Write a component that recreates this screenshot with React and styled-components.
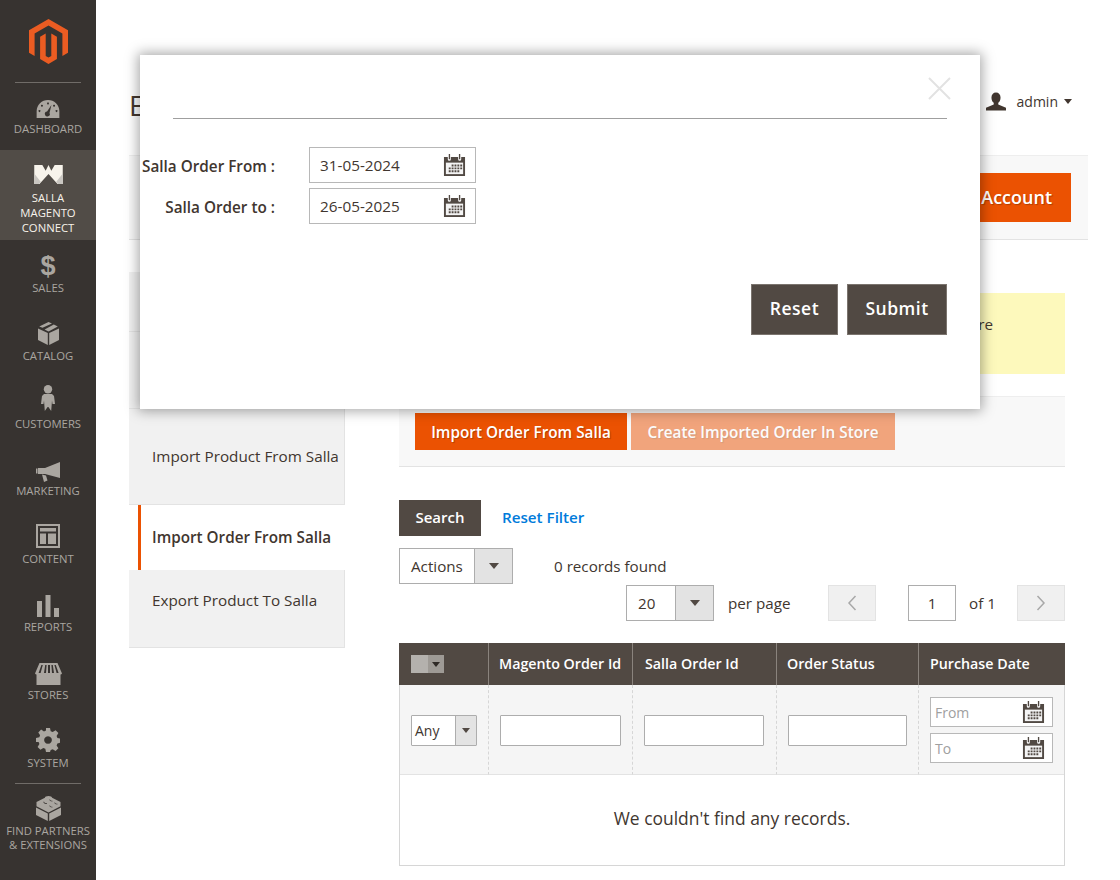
import styled, { createGlobalStyle } from "styled-components";

const GlobalStyle = createGlobalStyle`
  html, body {
    margin: 0;
    padding: 0;
    height: 880px;
    overflow: hidden;
    background: #fff;
    font-family: "Open Sans", "Liberation Sans", sans-serif;
    color: #41362f;
  }
  * {
    box-sizing: border-box;
  }
`;

const Page = styled.div`
  position: relative;
  display: flex;
  width: 1120px;
  height: 880px;
  overflow: hidden;
`;

const Sidebar = styled.nav`
  flex: 0 0 96px;
  background: #373330;
  display: flex;
  flex-direction: column;
  align-items: stretch;
`;

const LogoBox = styled.div`
  height: 83px;
  margin: 0 15px;
  border-bottom: 1px solid #706c68;
  display: flex;
  justify-content: center;
  padding-top: 19px;
`;

const MenuItem = styled.div`
  height: ${(p) => p.$h || 68}px;
  padding-top: ${(p) => p.$top || 0}px;
  background: ${(p) => (p.$active ? "#514c47" : "transparent")};
  color: ${(p) => (p.$active ? "#f7f3eb" : "#aaa6a0")};
  display: flex;
  flex-direction: column;
  align-items: center;
  font-size: 11.3px;
  line-height: ${(p) => (p.$active ? 15 : 14)}px;
  text-align: center;
  text-transform: uppercase;
  white-space: pre-line;
`;

const MenuIcon = styled.div`
  height: ${(p) => p.$h || 29}px;
  display: flex;
  align-items: flex-end;
  justify-content: center;
  margin-bottom: ${(p) => p.$mb ?? 4}px;
`;

const MenuDivider = styled.div`
  flex: 0 0 1px;
  margin: 0 15px;
  background: #706c68;
`;

const Main = styled.main`
  flex: 1;
  min-width: 0;
  padding: 0 32px 0 33px;
  display: flex;
  flex-direction: column;
`;

const Header = styled.header`
  height: 155px;
  display: flex;
  align-items: center;
  justify-content: space-between;
  padding: 54px 16px 0 0;
`;

const Title = styled.h1`
  margin: 0;
  font-size: 28px;
  font-weight: 400;
  color: #41362f;
`;

const AdminBox = styled.div`
  display: flex;
  align-items: center;
  font-size: 14px;
  color: #41362f;
  gap: 9px;
  padding-bottom: 7px;
`;

const AdminIcon = styled.svg`
  margin-right: 2px;
`;

const AdminCaret = styled.span`
  width: 0;
  height: 0;
  margin-left: -3px;
  border-left: 4.5px solid transparent;
  border-right: 4.5px solid transparent;
  border-top: 5px solid #41362f;
`;

const Caret = styled.span`
  width: 0;
  height: 0;
  border-left: ${(p) => p.$s || 5}px solid transparent;
  border-right: ${(p) => p.$s || 5}px solid transparent;
  border-top: ${(p) => (p.$s || 5) + 1}px solid ${(p) => p.$c || "#41362f"};
`;

const ActionBar = styled.div`
  height: 85px;
  background: #f8f8f8;
  border-top: 1px solid #eeeeee;
  border-bottom: 1px solid #e3e3e3;
  display: flex;
  align-items: center;
  justify-content: flex-end;
  padding: 0 17px 0 0;
`;

const PrimaryButton = styled.button`
  height: 49px;
  padding: 0 19px 2px;
  border: 0;
  background: #eb5202;
  color: #fff;
  font-family: inherit;
  font-size: 18px;
  font-weight: 600;
  text-shadow: 1px 1px 1px rgba(0, 0, 0, 0.25);
`;

const Columns = styled.div`
  display: flex;
  align-items: flex-start;
  margin-top: 32px;
`;

const Tabs = styled.aside`
  flex: 0 0 216px;
  margin-right: 54px;
  display: flex;
  flex-direction: column;
`;

const Tab = styled.div`
  height: ${(p) => p.$h}px;
  padding: ${(p) => p.$top}px 0 0 ${(p) => (p.$active ? 11 : 23)}px;
  margin-left: ${(p) => (p.$active ? 9 : 0)}px;
  background: ${(p) => (p.$active ? "#fff" : "#f1f1f1")};
  border-left: ${(p) => (p.$active ? "3px solid #eb5202" : "0")};
  border-right: ${(p) => (p.$active ? "0" : "1px solid #e3e3e3")};
  border-bottom: ${(p) => (p.$active ? "0" : "1px solid #e3e3e3")};
  font-size: 15.25px;
  line-height: 20px;
  font-weight: ${(p) => (p.$active ? 600 : 400)};
  color: #41362f;
  white-space: nowrap;
`;

const Content = styled.section`
  flex: 0 0 666px;
  display: flex;
  flex-direction: column;
  padding-top: 21px;
`;

const Notice = styled.div`
  height: 81px;
  background: #fdf9bc;
  padding: 20px 72px 0 0;
  font-size: 15.2px;
  line-height: 22px;
  text-align: right;
  color: #41362f;
`;

const ImportBar = styled.div`
  height: 71px;
  margin-top: 22px;
  background: #f8f8f8;
  border-top: 1px solid #eeeeee;
  border-bottom: 1px solid #e3e3e3;
  display: flex;
  align-items: center;
  gap: 4px;
  padding-left: 16px;
`;

const ImportButton = styled.button`
  height: 37px;
  width: ${(p) => p.$w}px;
  padding: 0;
  border: 0;
  background: #eb5202;
  color: #fff;
  opacity: ${(p) => (p.$faded ? 0.5 : 1)};
  font-family: inherit;
  font-size: 15.3px;
  font-weight: 600;
  text-shadow: 1px 1px 1px rgba(0, 0, 0, 0.25);
  white-space: nowrap;
`;

const SearchRow = styled.div`
  display: flex;
  align-items: center;
  gap: 21px;
  margin-top: 33px;
`;

const DarkButton = styled.button`
  height: 36px;
  width: 82px;
  padding: 0 0 2px;
  border: 0;
  background: #514943;
  color: #fff;
  font-family: inherit;
  font-size: 15px;
  font-weight: 600;
`;

const ResetLink = styled.a`
  color: #007bdb;
  font-size: 15.2px;
  font-weight: 600;
  margin-top: -2px;
`;

const ActionsRow = styled.div`
  display: flex;
  align-items: center;
  gap: 41px;
  margin-top: 12px;
  font-size: 15.2px;
`;

const SelectBox = styled.div`
  display: flex;
  width: ${(p) => p.$w}px;
  height: 36px;
  border: 1px solid #adadad;
  background: #fff;
  font-size: 15.2px;
`;

const SelectText = styled.div`
  flex: 1;
  display: flex;
  align-items: center;
  padding-left: 11px;
  color: #41362f;
`;

const SelectArrow = styled.div`
  width: ${(p) => p.$w || 38}px;
  background: #e3e3e3;
  border-left: 1px solid #adadad;
  display: flex;
  align-items: center;
  justify-content: center;
`;

const PagerRow = styled.div`
  display: flex;
  align-items: center;
  justify-content: flex-end;
  height: 36px;
  margin-top: 1px;
  font-size: 15.2px;
`;

const PerPage = styled.span`
  width: 62px;
  margin: 0 38px 0 14px;
  white-space: nowrap;
`;

const PagerButton = styled.div`
  width: 48px;
  height: 36px;
  background: #f0f0f0;
  border: 1px solid #e3e3e3;
  display: flex;
  align-items: center;
  justify-content: center;
`;

const PageInput = styled.div`
  width: 48px;
  height: 36px;
  margin: 0 13px 0 32px;
  border: 1px solid #adadad;
  display: flex;
  align-items: center;
  justify-content: center;
`;

const OfText = styled.span`
  width: 26px;
  margin-right: 22px;
  white-space: nowrap;
`;

const Grid = styled.div`
  margin-top: 22px;
  display: grid;
  grid-template-columns: 88px 144px 144px 142px 146px;
  border-bottom: 1px solid #d6d6d6;
  border-left: 1px solid #d6d6d6;
  border-right: 1px solid #d6d6d6;
`;

const HeadCell = styled.div`
  height: 42px;
  margin-left: ${(p) => (p.$first ? -1 : 0)}px;
  margin-right: ${(p) => (p.$last ? -1 : 0)}px;
  background: #514943;
  border-left: ${(p) => (p.$first ? "0" : "1px solid #8a837d")};
  color: #fff;
  font-size: 14.25px;
  font-weight: 600;
  display: flex;
  align-items: center;
  padding: 0 0 2px ${(p) => p.$pad}px;
  white-space: nowrap;
`;

const MassSelect = styled.div`
  display: flex;
  width: 33px;
  height: 18px;
  margin-top: 2px;
`;

const MassBox = styled.div`
  flex: 1;
  background: #b4b1ad;
`;

const MassArrow = styled.div`
  width: 16px;
  background: #9e9a95;
  display: flex;
  align-items: center;
  justify-content: center;
`;

const FilterCell = styled.div`
  height: 90px;
  background: #f5f5f5;
  border-left: ${(p) => (p.$first ? "0" : "1px dashed #d6d6d6")};
  border-bottom: 1px solid #e3e3e3;
  display: flex;
  flex-direction: column;
  justify-content: center;
  align-items: flex-start;
  gap: 6px;
  padding: 1px 0 0 11px;
`;

const TextField = styled.div`
  width: ${(p) => p.$w}px;
  height: 31px;
  background: #fff;
  border: 1px solid #adadad;
  border-radius: 1px;
`;

const AnySelect = styled.div`
  display: flex;
  width: 66px;
  height: 31px;
  background: #fff;
  border: 1px solid #adadad;
  border-radius: 1px;
  font-size: 14px;
`;

const AnyText = styled.div`
  flex: 1;
  display: flex;
  align-items: center;
  padding-left: 3px;
`;

const DateField = styled.div`
  width: 123px;
  height: 30px;
  background: #fff;
  border: 1px solid #b8b8b8;
  display: flex;
  align-items: center;
  justify-content: space-between;
  padding: 0 7px 0 4px;
  font-size: 14px;
  color: #a0a0a0;
`;

const EmptyRow = styled.div`
  grid-column: 1 / -1;
  height: 90px;
  padding-bottom: 4px;
  display: flex;
  align-items: center;
  justify-content: center;
  font-size: 17.45px;
  color: #41362f;
`;

const Modal = styled.div`
  position: absolute;
  left: 140px;
  top: 55px;
  width: 840px;
  height: 354px;
  background: #fff;
  box-shadow: 0 0 12px 2px rgba(0, 0, 0, 0.35);
  padding: 0 33px 0 2px;
  display: flex;
  flex-direction: column;
`;

const ModalHead = styled.div`
  position: relative;
  height: 64px;
  margin-left: 31px;
  border-bottom: 1px solid #9f9f9f;
`;

const CloseIcon = styled.svg`
  position: absolute;
  right: -4px;
  top: 22px;
`;

const FormRows = styled.div`
  display: flex;
  flex-direction: column;
  gap: 5px;
  margin-top: 28px;
`;

const FormRow = styled.div`
  display: flex;
  align-items: center;
  font-size: 15.3px;
  font-weight: 600;
  color: #41362f;
`;

const FormLabel = styled.label`
  width: 133px;
  text-align: right;
  margin: 2px 34px 0 0;
  white-space: nowrap;
`;

const DateInput = styled.div`
  width: 167px;
  height: 36px;
  border: 1px solid #b8b8b8;
  display: flex;
  align-items: center;
  justify-content: space-between;
  padding: 0 9px 0 10px;
  font-size: 15.3px;
  font-weight: 400;
  color: #41362f;
`;

const ModalButtons = styled.div`
  display: flex;
  justify-content: flex-end;
  gap: 9px;
  margin-top: 60px;
`;

const ModalButton = styled.button`
  width: ${(p) => p.$w}px;
  height: 51px;
  padding: 0 0 3px;
  border: 1px solid #7b746e;
  background: #514943;
  color: #fff;
  font-family: inherit;
  font-size: 17.5px;
  font-weight: 600;
  letter-spacing: 0.5px;
`;

const CalendarIcon = ({ size = 23 }) => (
  <svg width={size} height={size} viewBox="0 0 24 24">
    <path
      fill="#514943"
      d="M1 3h4v2.5a1.6 1.6 0 0 0 3.2 0V3h7.6v2.5a1.6 1.6 0 0 0 3.2 0V3h4v20H1z"
    />
    <path fill="#514943" d="M6 0h1.4v5.5H6zM16.6 0H18v5.5h-1.4z" />
    <rect x="3" y="9" width="18" height="12" fill="#f4f4f4" />
    <path
      fill="#514943"
      d="M9 11h2v2H9zm3 0h2v2h-2zm3 0h2v2h-2zm3 0h2v2h-2zM6 14h2v2H6zm3 0h2v2H9zm3 0h2v2h-2zm3 0h2v2h-2zm3 0h2v2h-2zM6 17h2v2H6zm3 0h2v2H9zm3 0h2v2h-2zm3 0h2v2h-2z"
    />
  </svg>
);

const MagentoLogo = () => (
  <svg width="39" height="45" viewBox="0 0 39 45">
    <path
      fill="#eb5c22"
      d="M19.5 0 39 11.3v22.4l-5.6 3.2V14.6L19.5 6.500 5.600 14.600v22.300L0 33.700V11.300z"
    />
    <path
      fill="#eb5c22"
      d="M19.500 45l-8.400-4.900V17.800l5.600-3.200v22.300l2.800 1.700 2.800-1.700V14.600l5.600 3.200v22.300z"
    />
  </svg>
);

const icons = {
  dashboard: (
    <svg width="24" height="18" viewBox="0 0 24 19">
      <path
        fill="#aaa6a0"
        fillRule="evenodd"
        d="M0 19v-7a12 12 0 0 1 24 0v7zM15.600 5.400 11 12.200a2.600 2.600 0 1 0 2.600 1.400zM12 2.600a1 1 0 1 0 .01 0zM5.600 5a1 1 0 1 0 .01 0zM18.400 5a1 1 0 1 0 .01 0zM3 10.600a1 1 0 1 0 .01 0zM21 10.600a1 1 0 1 0 .01 0z"
      />
    </svg>
  ),
  salla: (
    <svg width="29" height="19" viewBox="0 0 30 20">
      <path
        fill="#f7f3eb"
        d="M0 0h8.500l3.500 6 3-6 3 6 3.500-6H30v20h-5.500L15 9.500 5.500 20H0z"
      />
      <path fill="#c9c6c1" d="M0 9l7 9-2 2H0zM30 9l-7 9 2 2h5z" />
    </svg>
  ),
  sales: (
    <span style={{ fontSize: 27, fontWeight: 700, lineHeight: "21px", fontFamily: "Liberation Sans" }}>$</span>
  ),
  catalog: (
    <svg width="21" height="23" viewBox="0 0 21 23">
      <path fill="#aaa6a0" d="M0 6.600 9.800 11v12L0 18zM21 6.600 11.200 11v12L21 18z" />
      <path fill="#aaa6a0" d="M10.500 0 14 1.600 4.500 5.800 1.200 4.400zM15.800 2.400l4 2-9.300 5-3.900-1.900z" />
    </svg>
  ),
  customers: (
    <svg width="14" height="26" viewBox="0 0 14 26">
      <circle cx="7" cy="4.200" r="4.200" fill="#aaa6a0" />
      <path
        fill="#aaa6a0"
        d="M3 9h8l2 2 1 8h-2.500L11 15.500 10.200 26 7.400 22 6.600 22 3.800 26 3 15.500 2.500 19H0l1-8z"
      />
    </svg>
  ),
  marketing: (
    <svg width="24" height="20" viewBox="0 0 24 20">
      <path fill="#aaa6a0" d="M24 0v16L9 12H2V6h7z" />
      <path fill="#aaa6a0" d="M0 6.500h1.500v5H0zM6 12.500l4 1 1.500 5-3.500 1.500z" />
    </svg>
  ),
  content: (
    <svg width="24" height="24" viewBox="0 0 24 24">
      <path
        fill="#aaa6a0"
        fillRule="evenodd"
        d="M0 0h24v24H0zM2 2v20h20V2zM4 4h16v3.500H4zM4 9.500h6V20H4zM12 9.500h8V20h-8z"
      />
    </svg>
  ),
  reports: (
    <svg width="22" height="22" viewBox="0 0 22 22">
      <path fill="#aaa6a0" d="M0 6h5v16H0zM8.500 0h5v22h-5zM17 13h5v9h-5z" />
    </svg>
  ),
  stores: (
    <svg width="27" height="22" viewBox="0 0 27 22">
      <path
        fill="#aaa6a0"
        d="M4.500 0h18L27 10.500a2.300 2.300 0 0 1-1.500 1V22h-24V11.500A2.300 2.300 0 0 1 0 10.500zM6.400 2 3.600 10h2L7.800 2zM10.200 2 9 10h2l.6-8zM13 2v8h2V2zM16.400 2l.6 8h2l-1.200-8zM19.400 2l2.200 8h2l-2.800-8z"
      />
    </svg>
  ),
  system: (
    <svg width="24" height="24" viewBox="0 0 24 24">
      <path
        fill="#aaa6a0"
        fillRule="evenodd"
        d="M10 0h4l.7 3.300 2 .8L19.600 2.300l2.800 2.800-1.800 2.900.8 2 3.300.7v4l-3.300.7-.8 2 1.800 2.900-2.800 2.800-2.900-1.800-2 .8L14 24h-4l-.7-3.300-2-.8-2.900 1.800-2.800-2.800 1.800-2.900-.8-2L0 14v-4l3.300-.7.8-2L2.300 4.400l2.800-2.800 2.900 1.800 2-.8zM12 8.200a3.800 3.800 0 1 0 .01 0z"
      />
    </svg>
  ),
  partners: (
    <svg width="25" height="25" viewBox="0 0 25 25">
      <path fill="#aaa6a0" d="M0 11.500 11.800 17.500V25L0 19zM25 11.500 13.200 17.500V25L25 19z" />
      <path
        fill="#aaa6a0"
        d="M12.500 0c2 0 3.400.8 3.600 1.800l8.400 4.100v4.300l-12 6.200-12-6.200V5.900l8.400-4.100C8.900.8 10.500 0 12.500 0z"
      />
      <path
        fill="#373330"
        d="M8 5.400c0 1 1.300 1.800 3 1.800v.8c-2 0-3.600-.9-3.600-2.100zM14 3.400c0 .8 1 1.300 2.400 1.300v.7c-1.800 0-3-.8-3-2zM14 9.400c0 .8 1 1.300 2.400 1.300v.7c-1.800 0-3-.8-3-2zM19 6.400c0 .8 1 1.300 2.400 1.300v.7c-1.800 0-3-.8-3-2z"
      />
    </svg>
  ),
};

const menu = [
  { key: "dashboard", label: "Dashboard", h: 67, top: 6 },
  { key: "salla", label: "Salla\nMagento\nConnect", h: 90, top: 6, icon: 28, mb: 6, active: true },
  { key: "sales", label: "Sales", h: 68, top: 8 },
  { key: "catalog", label: "Catalog", h: 68, top: 8 },
  { key: "customers", label: "Customers", h: 67, top: 8, icon: 27, mb: 6 },
  { key: "marketing", label: "Marketing", h: 68, top: 8, icon: 31, mb: 2 },
  { key: "content", label: "Content", h: 68, top: 8 },
  { key: "reports", label: "Reports", h: 68, top: 8, icon: 30, mb: 3 },
  { key: "stores", label: "Stores", h: 68, top: 8, icon: 30, mb: 3 },
  { key: "system", label: "System", h: 68, top: 8 },
];

const App = () => {
  return (
    <Page>
      <GlobalStyle />
      <Sidebar>
        <LogoBox>
          <MagentoLogo />
        </LogoBox>
        {menu.map((m) => (
          <MenuItem key={m.key} $h={m.h} $top={m.top} $active={m.active}>
            <MenuIcon $h={m.icon} $mb={m.mb}>{icons[m.key]}</MenuIcon>
            {m.label}
          </MenuItem>
        ))}
        <MenuDivider />
        <MenuItem $h={80}>
          <MenuIcon $h={37} $mb={3}>{icons.partners}</MenuIcon>
          {"Find Partners\n& Extensions"}
        </MenuItem>
      </Sidebar>

      <Main>
        <Header>
          <Title>Export Order</Title>
          <AdminBox>
            <AdminIcon width="20" height="19" viewBox="0 0 22 20">
              <path
                fill="#41362f"
                d="M11 0c3 0 5 2.300 5 5.500 0 2.500-1 4.800-2.500 6v1.800L22 17v3H0v-3l8.500-3.700v-1.800C7 10.300 6 8 6 5.500 6 2.300 8 0 11 0z"
              />
            </AdminIcon>
            admin
            <AdminCaret />
          </AdminBox>
        </Header>
        <ActionBar>
          <PrimaryButton>Add Salla Account</PrimaryButton>
        </ActionBar>

        <Columns>
          <Tabs>
            <Tab $h={60} $top={20}>Salla Account</Tab>
            <Tab $h={77} $top={20}>Export Category</Tab>
            <Tab $h={96} $top={37}>Import Product From Salla</Tab>
            <Tab $h={65} $top={22} $active>Import Order From Salla</Tab>
            <Tab $h={78} $top={20}>Export Product To Salla</Tab>
          </Tabs>
          <Content>
            <Notice>are</Notice>
            <ImportBar>
              <ImportButton $w={212}>Import Order From Salla</ImportButton>
              <ImportButton $w={264} $faded>Create Imported Order In Store</ImportButton>
            </ImportBar>
            <SearchRow>
              <DarkButton>Search</DarkButton>
              <ResetLink>Reset Filter</ResetLink>
            </SearchRow>
            <ActionsRow>
              <SelectBox $w={114}>
                <SelectText>Actions</SelectText>
                <SelectArrow><Caret $c="#514943" /></SelectArrow>
              </SelectBox>
              <span>0 records found</span>
            </ActionsRow>
            <PagerRow>
              <SelectBox $w={88}>
                <SelectText>20</SelectText>
                <SelectArrow><Caret $c="#514943" /></SelectArrow>
              </SelectBox>
              <PerPage>per page</PerPage>
              <PagerButton>
                <svg width="10" height="16" viewBox="0 0 10 16">
                  <path d="M8.500 1 2 8l6.500 7" fill="none" stroke="#a8a8a8" strokeWidth="1.500" />
                </svg>
              </PagerButton>
              <PageInput>1</PageInput>
              <OfText>of 1</OfText>
              <PagerButton>
                <svg width="10" height="16" viewBox="0 0 10 16">
                  <path d="M1.500 1 8 8l-6.500 7" fill="none" stroke="#a8a8a8" strokeWidth="1.500" />
                </svg>
              </PagerButton>
            </PagerRow>
            <Grid>
              <HeadCell $first $pad={12}>
                <MassSelect>
                  <MassBox />
                  <MassArrow><Caret $s={4} $c="#2f2a26" /></MassArrow>
                </MassSelect>
              </HeadCell>
              <HeadCell $pad={10}>Magento Order Id</HeadCell>
              <HeadCell $pad={12}>Salla Order Id</HeadCell>
              <HeadCell $pad={10}>Order Status</HeadCell>
              <HeadCell $last $pad={11}>Purchase Date</HeadCell>

              <FilterCell $first>
                <AnySelect>
                  <AnyText>Any</AnyText>
                  <SelectArrow $w={21}><Caret $s={4} $c="#514943" /></SelectArrow>
                </AnySelect>
              </FilterCell>
              <FilterCell><TextField $w={121} /></FilterCell>
              <FilterCell><TextField $w={120} /></FilterCell>
              <FilterCell><TextField $w={119} /></FilterCell>
              <FilterCell>
                <DateField>From<CalendarIcon /></DateField>
                <DateField>To<CalendarIcon /></DateField>
              </FilterCell>

              <EmptyRow>We couldn't find any records.</EmptyRow>
            </Grid>
          </Content>
        </Columns>
      </Main>

      <Modal>
        <ModalHead>
          <CloseIcon width="23" height="23" viewBox="0 0 23 23">
            <path d="M1 1l21 21M22 1 1 22" stroke="#e2e2e2" strokeWidth="2" fill="none" />
          </CloseIcon>
        </ModalHead>
        <FormRows>
          <FormRow>
            <FormLabel>Salla Order From :</FormLabel>
            <DateInput>31-05-2024<CalendarIcon /></DateInput>
          </FormRow>
          <FormRow>
            <FormLabel>Salla Order to :</FormLabel>
            <DateInput>26-05-2025<CalendarIcon /></DateInput>
          </FormRow>
        </FormRows>
        <ModalButtons>
          <ModalButton $w={87}>Reset</ModalButton>
          <ModalButton $w={100}>Submit</ModalButton>
        </ModalButtons>
      </Modal>
    </Page>
  );
};

export default App;
